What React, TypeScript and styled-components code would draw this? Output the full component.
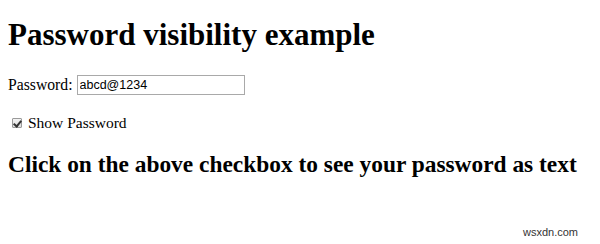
import React, { useState } from "react";
import styled, { createGlobalStyle } from "styled-components";

const GlobalStyle = createGlobalStyle`
  html, body {
    margin: 0;
    padding: 0;
    background: #ffffff;
  }
  body {
    font-family: "Liberation Serif", "Times New Roman", serif;
    color: #000000;
  }
`;

const Page = styled.div`
  position: relative;
  width: 600px;
  height: 244px;
  box-sizing: border-box;
  padding: 18px 8px 0;
  overflow: hidden;
`;

const Title = styled.h1`
  margin: 0;
  font-size: 31px;
  line-height: 33px;
  font-weight: 700;
`;

const FieldRow = styled.div`
  display: flex;
  align-items: center;
  gap: 4px;
  margin-top: 24px;
  height: 20px;
  font-size: 15.7px;
`;

const PasswordInput = styled.input`
  box-sizing: border-box;
  width: 168px;
  height: 20px;
  margin: 0;
  padding: 1px 2px;
  border: 1px solid #a9a9a9;
  font-family: "Liberation Sans", Arial, sans-serif;
  font-size: 12.5px;
  color: #000000;
  outline: none;
`;

const ToggleRow = styled.label`
  display: flex;
  align-items: center;
  gap: 6px;
  margin-top: 20px;
  padding-left: 4px;
  height: 16px;
  font-size: 15.5px;
  cursor: pointer;
`;

const Checkbox = styled.input`
  appearance: none;
  position: relative;
  box-sizing: border-box;
  width: 10px;
  height: 10px;
  margin: 0;
  border: 1px solid #9a9a9a;
  border-radius: 1px;
  background: linear-gradient(#f4f4f4, #dcdcdc);

  &:checked::after {
    content: "";
    position: absolute;
    left: 2px;
    top: 0px;
    width: 3px;
    height: 6px;
    border: solid #333333;
    border-width: 0 2px 2px 0;
    transform: rotate(40deg);
  }
`;

const Hint = styled.h2`
  margin: 20px 0 0;
  font-size: 23.4px;
  line-height: 27px;
  font-weight: 700;
`;

const Watermark = styled.div`
  position: absolute;
  right: 22px;
  bottom: 6px;
  font-family: "Liberation Sans", Arial, sans-serif;
  font-size: 11px;
  color: #333333;
`;

export default function App() {
  const [show, setShow] = useState(true);
  const [value, setValue] = useState("abcd@1234");

  return (
    <>
      <GlobalStyle />
      <Page>
        <Title>Password visibility example</Title>
        <FieldRow>
          <span>Password:</span>
          <PasswordInput
            type={show ? "text" : "password"}
            value={value}
            onChange={(e) => setValue(e.target.value)}
          />
        </FieldRow>
        <ToggleRow>
          <Checkbox
            type="checkbox"
            checked={show}
            onChange={(e) => setShow(e.target.checked)}
          />
          Show Password
        </ToggleRow>
        <Hint>Click on the above checkbox to see your password as text</Hint>
        <Watermark>wsxdn.com</Watermark>
      </Page>
    </>
  );
}
